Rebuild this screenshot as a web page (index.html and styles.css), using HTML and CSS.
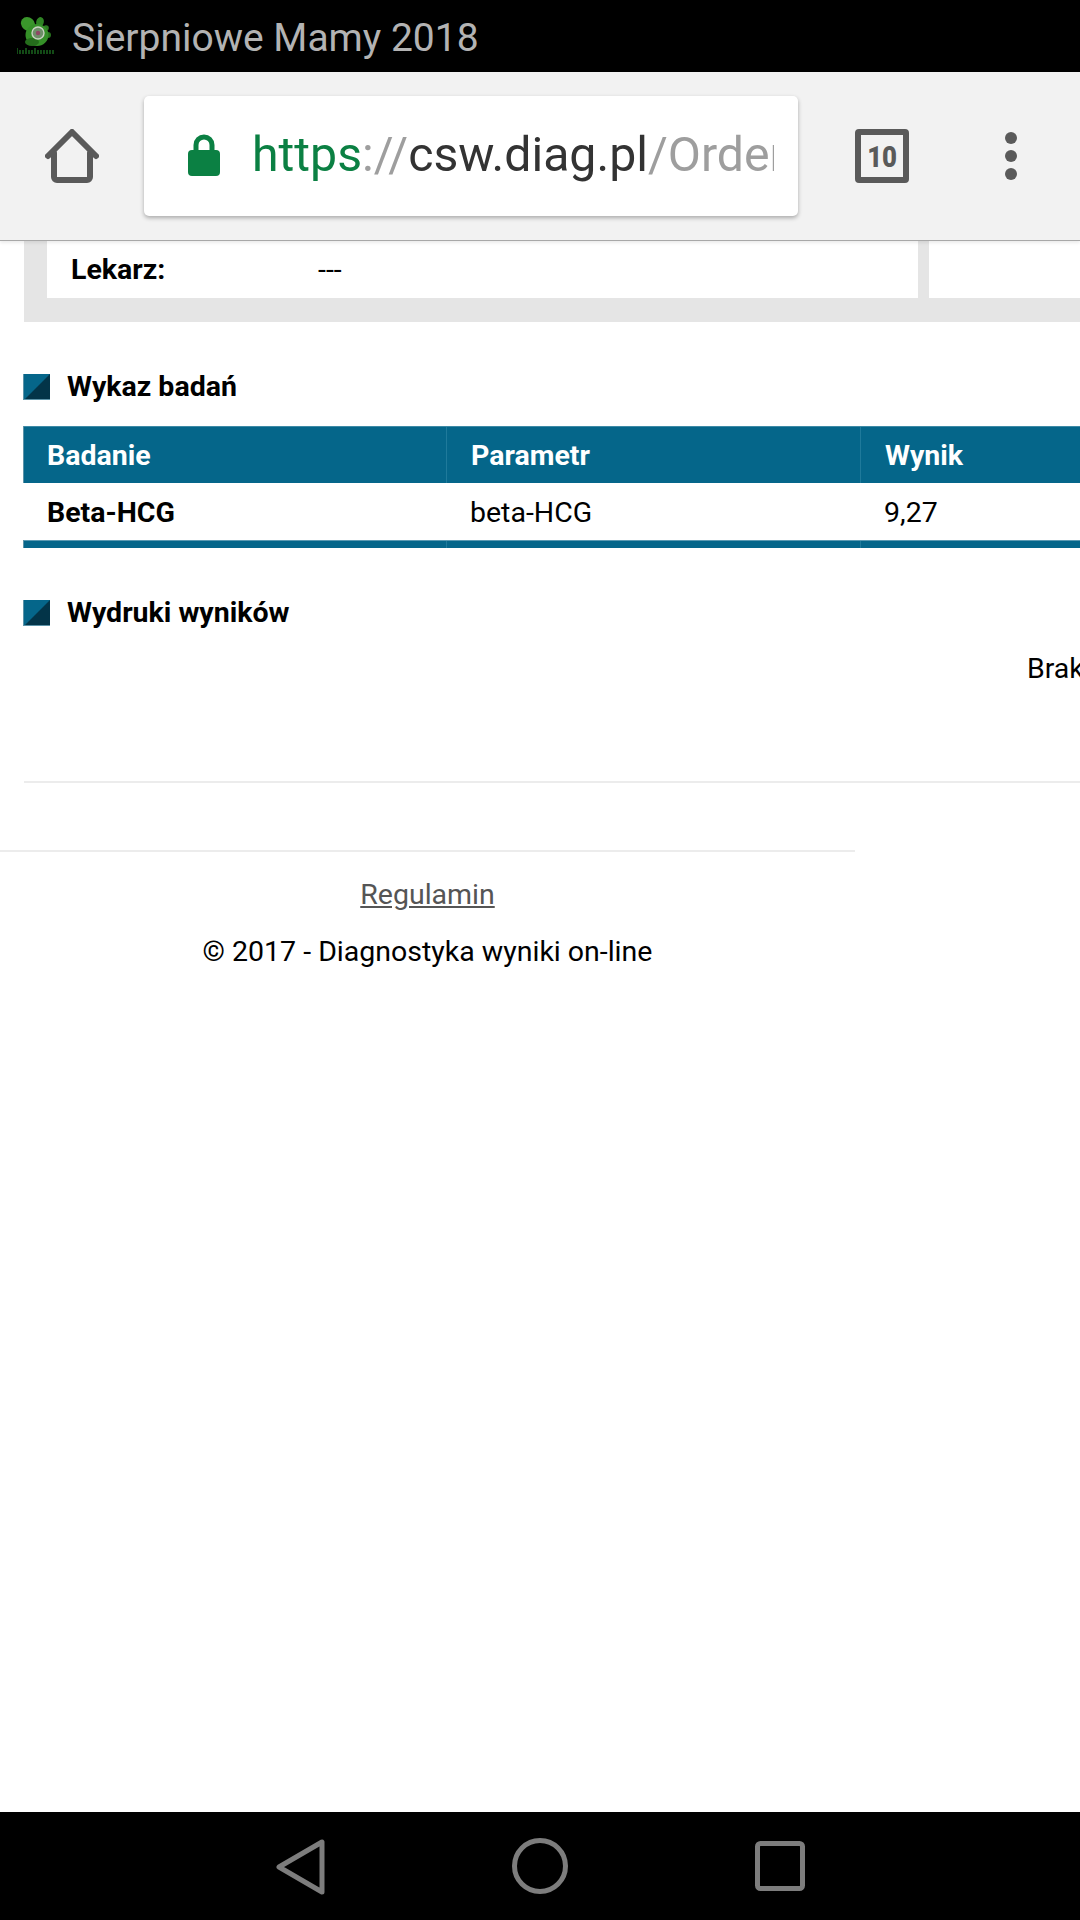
FILE: index.html
```html
<!DOCTYPE html>
<html lang="pl">
<head>
<meta charset="utf-8">
<title>Wyniki</title>
<link rel="stylesheet" href="styles.css">
</head>
<body>
<div class="screen">
  <header class="status">
    <svg class="logo" width="40" height="40" viewBox="0 0 40 40">
      <ellipse cx="11" cy="8" rx="7.5" ry="6.5" transform="rotate(40 11 8)" fill="#3a962b"/>
      <ellipse cx="23" cy="6" rx="3.8" ry="5" transform="rotate(15 23 6)" fill="#2f8424"/>
      <circle cx="29" cy="12" r="2.8" fill="#2c7a21"/>
      <circle cx="31" cy="19" r="3" fill="#27701d"/>
      <ellipse cx="20" cy="19" rx="11.5" ry="11" fill="#359028"/>
      <ellipse cx="15" cy="26" rx="7" ry="4" fill="#256d1c"/>
      <circle cx="21" cy="17" r="6" fill="#6d8f68" stroke="#c9d2c2" stroke-width="1.4"/>
      <circle cx="21" cy="17" r="2.2" fill="#8f4766"/>
      <path d="M0 32v6M3 34v4M6 34v4M9 32v6M12 34v4M15 34v4M18 32v6M21 34v4M24 34v4M27 34v4M30 34v4M33 34v4M36 34v4" stroke="#17581a" stroke-width="1.7"/>
    </svg>
    <span class="status-title">Sierpniowe Mamy 2018</span>
  </header>

  <nav class="toolbar">
    <svg class="home" width="54" height="54" viewBox="0 0 54 54">
      <path d="M3 27 27 3 51 27M9 24V48a3 3 0 0 0 3 3H42a3 3 0 0 0 3-3V24" fill="none" stroke="#5a5a5a" stroke-width="6" stroke-linecap="round" stroke-linejoin="round"/>
    </svg>
    <div class="urlbar">
      <svg class="lock" width="32" height="42" viewBox="0 0 32 42">
        <path d="M8 20V11a8 8 0 0 1 16 0V20" fill="none" stroke="#0b8043" stroke-width="5"/>
        <rect x="0" y="16" width="32" height="26" rx="4" fill="#0b8043"/>
      </svg>
      <div class="url"><span class="u-green">https</span><span class="u-grey">://</span><span class="u-dark">csw.diag.pl</span><span class="u-grey">/Order</span></div>
    </div>
    <div class="tabs"><span class="tabs-num">10</span></div>
    <div class="dots"><i></i><i></i><i></i></div>
  </nav>

  <main class="page">
    <section class="panel">
      <div class="cell cell-main"><b class="label">Lekarz:</b><span>---</span></div>
      <div class="cell cell-side"></div>
    </section>

    <h2 class="heading"><i class="marker"></i><span class="heading-text">Wykaz badań</span></h2>
    <div class="table">
      <div class="row row-head"><div class="c c1">Badanie</div><div class="c c2">Parametr</div><div class="c c3">Wynik</div></div>
      <div class="row row-body"><div class="c c1 strong">Beta-HCG</div><div class="c c2">beta-HCG</div><div class="c c3">9,27</div></div>
      <div class="row row-foot"><div class="c c1"></div><div class="c c2"></div><div class="c c3"></div></div>
    </div>

    <h2 class="heading heading-2"><i class="marker"></i><span class="heading-text">Wydruki wyników</span></h2>
    <p class="none">Brak</p>
    <hr class="rule">

    <footer class="foot">
      <a class="terms" href="#">Regulamin</a>
      <p class="copy">© 2017 - Diagnostyka wyniki on-line</p>
    </footer>
  </main>

  <nav class="sysbar">
    <svg width="50" height="56" viewBox="0 0 50 56" class="sys-back">
      <path d="M3 28 46 3V53Z" fill="none" stroke="#7d7d7d" stroke-width="5" stroke-linejoin="round"/>
    </svg>
    <svg width="56" height="56" viewBox="0 0 56 56" class="sys-home">
      <circle cx="28" cy="28" r="25.5" fill="none" stroke="#7d7d7d" stroke-width="5"/>
    </svg>
    <svg width="50" height="50" viewBox="0 0 50 50" class="sys-recent">
      <rect x="2.5" y="2.5" width="45" height="45" rx="3" fill="none" stroke="#7d7d7d" stroke-width="5"/>
    </svg>
  </nav>
</div>
</body>
</html>
```
FILE: styles.css
```css
* { box-sizing: border-box; }
html, body { margin: 0; padding: 0; }
body { background: #fff; font-family: Roboto, "Liberation Sans", sans-serif; color: #000; overflow: hidden; }
.screen { width: 1080px; height: 1920px; display: flex; flex-direction: column; overflow: hidden; }

.status { height: 72px; flex: none; background: #000; display: flex; align-items: center; padding-left: 17px; }
.logo { flex: none; margin-top: -1px; }
.status-title { margin-left: 15px; font-size: 39px; line-height: 46px; margin-top: 3px; color: #b3b3b3; white-space: nowrap; }

.toolbar { height: 169px; flex: none; background: #f2f2f2; border-bottom: 1px solid #a8a8a8; display: flex; align-items: flex-start; padding-left: 45px; position: relative; z-index: 1; box-shadow: 0 2px 3px rgba(0,0,0,.08); }
.home { flex: none; margin-top: 57px; }
.urlbar { flex: none; width: 654px; height: 120px; margin-top: 24px; margin-left: 45px; background: #fff; border-radius: 5px; box-shadow: 0 2px 4px rgba(0,0,0,.3); display: flex; align-items: center; padding-left: 44px; }
.lock { flex: none; margin-top: -3px; }
.url { margin-left: 32px; width: 522px; overflow: hidden; white-space: nowrap; font-size: 48.2px; line-height: 60px; margin-top: -2px; }
.u-green { color: #0b8043; }
.u-grey { color: #9e9e9e; }
.u-dark { color: #333; }
.tabs { flex: none; width: 54px; height: 54px; margin-top: 57px; margin-left: 57px; border: 6px solid #5a5a5a; border-radius: 4px; color: #5a5a5a; font-size: 30px; font-weight: 900; line-height: 43px; text-align: center; }
.tabs-num { display: inline-block; transform: scaleX(.86); letter-spacing: -.5px; }
.dots { flex: none; margin-top: 60px; margin-left: 96px; display: flex; flex-direction: column; gap: 6px; }
.dots i { display: block; width: 12px; height: 12px; border-radius: 50%; background: #5a5a5a; }

.page { flex: 1; min-height: 0; overflow: hidden; font-size: 28.5px; }

.panel { margin-left: 24px; width: 1100px; height: 81px; padding: 0 23px 24px; background: #e5e5e5; display: flex; gap: 11px; }
.cell { flex: none; background: #fff; height: 57px; display: flex; align-items: center; }
.cell-main { width: 871px; padding-left: 24px; }
.cell-side { width: 200px; }
.label { width: 247px; }

.heading { margin: 52px 0 26px 24px; height: 26px; display: flex; align-items: center; font-size: 28.5px; font-weight: 700; white-space: nowrap; }
.heading-text { margin-top: -2px; }
.marker { flex: none; width: 27px; height: 26px; margin-right: 17px; margin-left: -1px; background: linear-gradient(135deg, #05668a 49%, #033448 53%); border: 1px solid #5c93a8; border-width: 0 0 1px 1px; }

.table { margin-left: 23px; width: 1100px; border-left: 1px solid #5c93a8; }
.row { display: flex; }
.c { flex: none; padding-left: 24px; white-space: nowrap; }
.c1 { width: 422px; padding-left: 23px; }
.c2 { width: 414px; }
.c3 { width: 264px; }
.row-head { height: 57px; background: #05668a; border-top: 1px solid #3d8aa6; color: #fff; font-weight: 700; line-height: 58px; }
.row-head .c + .c, .row-foot .c + .c { border-left: 1px solid #1f7a9b; }
.row-body { height: 57px; line-height: 59px; }
.table .row-body { margin-left: -1px; padding-left: 1px; background: #fff; }
.strong { font-weight: 700; }
.row-foot { height: 8px; background: #05668a; border-top: 1px solid #5c9ab2; }

.heading-2 { margin-bottom: 0; }
.none { margin: 26px 0 0 1027px; height: 34px; line-height: 34px; white-space: nowrap; }
.rule { margin: 95px 0 0 24px; width: 1056px; height: 2px; border: 0; background: #ececec; }

.foot { margin-top: 67px; width: 855px; border-top: 2px solid #ececec; text-align: center; padding-top: 26px; }
.terms { display: inline-block; color: #555; text-decoration: underline; line-height: 34px; }
.copy { margin: 23px 0 0; line-height: 34px; }

.sysbar { height: 108px; flex: none; background: #000; position: relative; }
.sysbar svg { position: absolute; }
.sys-back { left: 276px; top: 27px; }
.sys-home { left: 512px; top: 26px; }
.sys-recent { left: 755px; top: 29px; }
```
